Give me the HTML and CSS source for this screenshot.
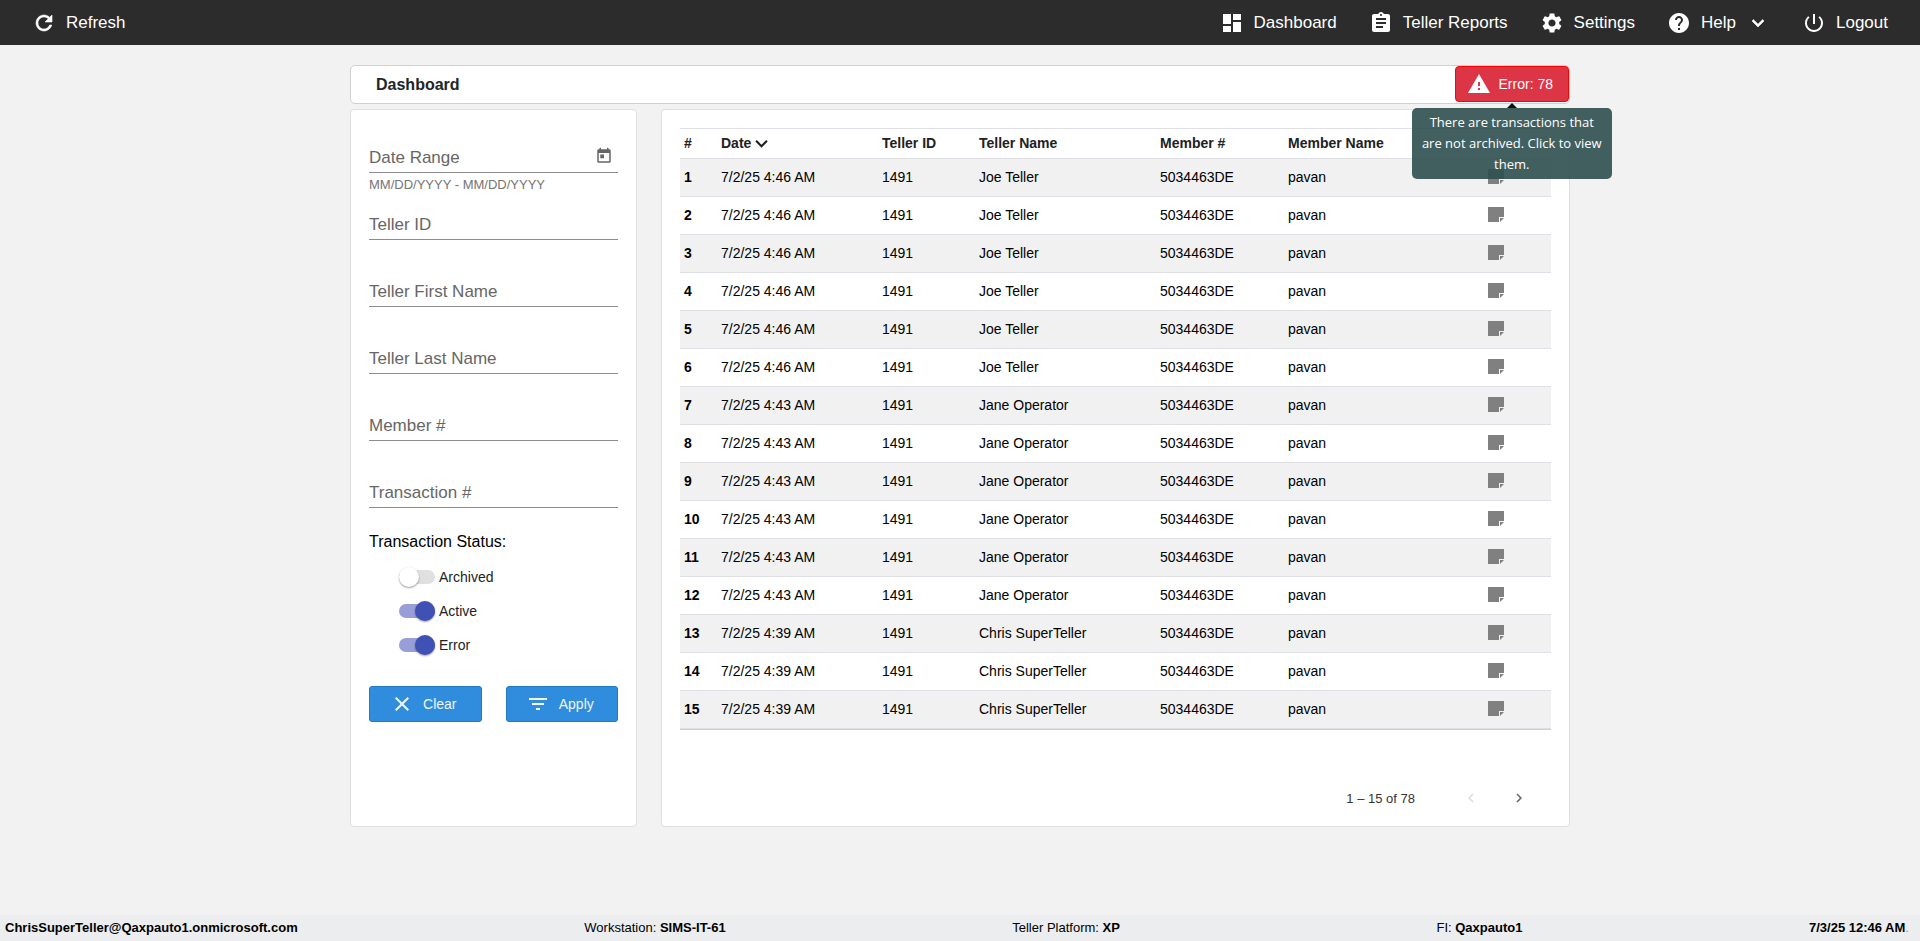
FILE: index.html
```html
<!DOCTYPE html>
<html lang="en">
<head>
    <meta charset="UTF-8">
    <meta name="viewport" content="width=device-width, initial-scale=1.0">
    <title>Dashboard</title>
    <link rel="stylesheet" href="styles.css">
</head>
<body>

    <nav class="topbar">
        <button class="nav-item" type="button">
            <svg class="icon" viewBox="0 0 24 24"><path d="M17.65 6.35C16.2 4.9 14.21 4 12 4c-4.42 0-7.99 3.58-7.99 8s3.57 8 7.99 8c3.73 0 6.84-2.55 7.73-6h-2.08c-.82 2.33-3.04 4-5.65 4-3.31 0-6-2.69-6-6s2.69-6 6-6c1.66 0 3.14.69 4.22 1.78L13 11h7V4l-2.35 2.35z" stroke="currentColor" stroke-width=".6"/></svg>
            Refresh
        </button>
        <div class="nav-links">
            <a class="nav-item" href="#dashboard">
                <svg class="icon" viewBox="0 0 24 24"><path d="M3 13h8V3H3v10zm0 8h8v-6H3v6zm10 0h8V11h-8v10zm0-18v6h8V3h-8z"/></svg>
                Dashboard
            </a>
            <a class="nav-item" href="#reports">
                <svg class="icon" viewBox="0 0 24 24"><path d="M19 3h-4.18C14.4 1.84 13.3 1 12 1c-1.3 0-2.4.84-2.82 2H5c-1.1 0-2 .9-2 2v14c0 1.1.9 2 2 2h14c1.1 0 2-.9 2-2V5c0-1.1-.9-2-2-2zm-7 0c.55 0 1 .45 1 1s-.45 1-1 1-1-.45-1-1 .45-1 1-1zm2 14H7v-2h7v2zm3-4H7v-2h10v2zm0-4H7V7h10v2z"/></svg>
                Teller Reports
            </a>
            <a class="nav-item" href="#settings">
                <svg class="icon" viewBox="0 0 24 24"><path d="M19.14 12.94c.04-.3.06-.61.06-.94 0-.32-.02-.64-.07-.94l2.03-1.58c.18-.14.23-.41.12-.61l-1.92-3.32c-.12-.22-.37-.29-.59-.22l-2.39.96c-.5-.38-1.03-.7-1.62-.94l-.36-2.54c-.04-.24-.24-.41-.48-.41h-3.84c-.24 0-.43.17-.47.41l-.36 2.54c-.59.24-1.13.57-1.62.94l-2.39-.96c-.22-.08-.47 0-.59.22L2.74 8.87c-.12.21-.08.47.12.61l2.03 1.58c-.05.3-.09.63-.09.94s.02.64.07.94l-2.03 1.58c-.18.14-.23.41-.12.61l1.92 3.32c.12.22.37.29.59.22l2.39-.96c.5.38 1.03.7 1.62.94l.36 2.54c.05.24.24.41.48.41h3.84c.24 0 .44-.17.47-.41l.36-2.54c.59-.24 1.13-.56 1.62-.94l2.39.96c.22.08.47 0 .59-.22l1.92-3.32c.12-.22.07-.47-.12-.61l-2.01-1.58zM12 15.6c-1.98 0-3.6-1.62-3.6-3.6s1.62-3.6 3.6-3.6 3.6 1.62 3.6 3.6-1.62 3.6-3.6 3.6z"/></svg>
                Settings
            </a>
            <button class="nav-item" type="button">
                <svg class="icon" viewBox="0 0 24 24"><path d="M12 2C6.48 2 2 6.48 2 12s4.48 10 10 10 10-4.48 10-10S17.52 2 12 2zm1 17h-2v-2h2v2zm2.07-7.75l-.9.92C13.45 12.9 13 13.5 13 15h-2v-.5c0-1.1.45-2.1 1.17-2.83l1.24-1.26c.37-.36.59-.86.59-1.41 0-1.1-.9-2-2-2s-2 .9-2 2H8c0-2.21 1.79-4 4-4s4 1.79 4 4c0 .88-.36 1.68-.93 2.25z"/></svg>
                Help
                <svg class="icon" viewBox="0 0 24 24"><path d="M16.59 8.59L12 13.17 7.41 8.59 6 10l6 6 6-6z" stroke="currentColor" stroke-width=".6"/></svg>
            </button>
            <button class="nav-item" type="button">
                <svg class="icon" viewBox="0 0 24 24"><path d="M13 3h-2v10h2V3zm4.83 2.17l-1.42 1.42C17.99 7.86 19 9.81 19 12c0 3.87-3.13 7-7 7s-7-3.13-7-7c0-2.19 1.01-4.14 2.58-5.42L6.17 5.17C4.23 6.82 3 9.26 3 12c0 4.97 4.03 9 9 9s9-4.03 9-9c0-2.74-1.23-5.18-3.17-6.83z"/></svg>
                Logout
            </button>
        </div>
    </nav>

    <main>
        <header class="title-bar">
            <h1>Dashboard</h1>
            <div class="error-wrap">
                <button class="error-button" type="button" aria-describedby="error-tip">
                    <svg class="icon" viewBox="0 0 24 24"><path d="M1 21h22L12 2 1 21zm12-3h-2v-2h2v2zm0-4h-2v-4h2v4z"/></svg>
                    Error: 78
                </button>
                <div class="tooltip" id="error-tip" role="tooltip">There are transactions that<br>are not archived. Click to view<br>them.</div>
            </div>
        </header>

        <div class="columns">
            <form class="card filters">
                <div class="field">
                    <div class="field-box">
                        <label for="date-range">Date Range</label>
                        <input type="text" id="date-range">
                        <button class="calendar-button" type="button" aria-label="Open calendar">
                            <svg viewBox="0 0 24 24"><path d="M19 3h-1V1h-2v2H8V1H6v2H5c-1.11 0-1.99.9-1.99 2L3 19c0 1.1.89 2 2 2h14c1.1 0 2-.9 2-2V5c0-1.1-.9-2-2-2zm0 16H5V8h14v11zM7 10h5v5H7z"/></svg>
                        </button>
                    </div>
                    <div class="hint">MM/DD/YYYY - MM/DD/YYYY</div>
                </div>
                <div class="field">
                    <div class="field-box">
                        <label for="teller-id">Teller ID</label>
                        <input type="text" id="teller-id">
                    </div>
                </div>
                <div class="field">
                    <div class="field-box">
                        <label for="first-name">Teller First Name</label>
                        <input type="text" id="first-name">
                    </div>
                </div>
                <div class="field">
                    <div class="field-box">
                        <label for="last-name">Teller Last Name</label>
                        <input type="text" id="last-name">
                    </div>
                </div>
                <div class="field">
                    <div class="field-box">
                        <label for="member">Member #</label>
                        <input type="text" id="member">
                    </div>
                </div>
                <div class="field">
                    <div class="field-box">
                        <label for="transaction">Transaction #</label>
                        <input type="text" id="transaction">
                    </div>
                </div>

                <h2>Transaction Status:</h2>
                <div class="toggles">
                    <div class="toggle">
                        <input type="checkbox" id="archived">
                        <label for="archived">Archived</label>
                    </div>
                    <div class="toggle">
                        <input type="checkbox" id="active" checked>
                        <label for="active">Active</label>
                    </div>
                    <div class="toggle">
                        <input type="checkbox" id="error" checked>
                        <label for="error">Error</label>
                    </div>
                </div>

                <div class="actions">
                    <button class="action-button" type="reset">
                        <svg class="icon" viewBox="0 0 24 24"><path d="M19 6.41L17.59 5 12 10.59 6.41 5 5 6.41 10.59 12 5 17.59 6.41 19 12 13.41 17.59 19 19 17.59 13.41 12z"/></svg>
                        Clear
                    </button>
                    <button class="action-button" type="button">
                        <svg class="icon" viewBox="0 0 24 24"><path d="M10 18h4v-2h-4v2zM3 6v2h18V6H3zm3 7h12v-2H6v2z"/></svg>
                        Apply
                    </button>
                </div>
            </form>

            <section class="card results">
                <table>
                    <thead>
                        <tr>
                            <th class="col-num">#</th>
                            <th class="col-date">Date <svg class="sort-icon" viewBox="0 0 12 8"><path d="M1 1.5l5 5 5-5"/></svg></th>
                            <th class="col-id">Teller ID</th>
                            <th class="col-teller">Teller Name</th>
                            <th class="col-member">Member #</th>
                            <th class="col-name">Member Name</th>
                            <th class="col-note"></th>
                        </tr>
                    </thead>
                    <tbody id="rows"></tbody>
                </table>
                <div class="paginator">
                    <span>1 – 15 of 78</span>
                    <div class="pages">
                        <button type="button" aria-label="Previous page" disabled>
                            <svg viewBox="0 0 24 24"><path d="M15.41 7.41L14 6l-6 6 6 6 1.41-1.41L10.83 12z"/></svg>
                        </button>
                        <button type="button" aria-label="Next page">
                            <svg viewBox="0 0 24 24"><path d="M10 6L8.59 7.41 13.17 12l-4.58 4.59L10 18l6-6z"/></svg>
                        </button>
                    </div>
                </div>
            </section>
        </div>
    </main>

    <footer>
        <b>ChrisSuperTeller@Qaxpauto1.onmicrosoft.com</b>
        <span>Workstation: <b>SIMS-IT-61</b></span>
        <span class="platform">Teller Platform: <b>XP</b></span>
        <span>FI: <b>Qaxpauto1</b></span>
        <span><b>7/3/25 12:46 AM</b><span class="dot">.</span></span>
    </footer>

    <script>
        // six rows for Joe, six for Jane, three for Chris
        const groups = [
            { date: '7/2/25 4:46 AM', teller: 'Joe Teller', count: 6 },
            { date: '7/2/25 4:43 AM', teller: 'Jane Operator', count: 6 },
            { date: '7/2/25 4:39 AM', teller: 'Chris SuperTeller', count: 3 }
        ];

        function showRows() {
            let html = '';
            let number = 1;
            groups.forEach(group => {
                for (let i = 0; i < group.count; i++) {
                    html += `
                        <tr>
                            <th scope="row">${number}</th>
                            <td>${group.date}</td>
                            <td>1491</td>
                            <td>${group.teller}</td>
                            <td>5034463DE</td>
                            <td>pavan</td>
                            <td class="note">
                                <button type="button" aria-label="Notes">
                                    <svg viewBox="0 0 16 15"><path d="M0 0h16v10h-5v5H0z"/><path d="M12 11h4l-4 4z"/></svg>
                                </button>
                            </td>
                        </tr>
                    `;
                    number++;
                }
            });
            document.getElementById('rows').innerHTML = html;
        }

        showRows();
    </script>

</body>
</html>
```
FILE: styles.css
```css
* {
    box-sizing: border-box;
}
body {
    font-family: "Liberation Sans", Arial, sans-serif;
    font-size: 14px;
    margin: 0;
    min-height: 100vh;
    display: flex;
    flex-direction: column;
    background-color: #f2f2f2;
    color: #000;
}
button {
    font-family: inherit;
    padding: 0;
    border: none;
    background: none;
    cursor: pointer;
}
svg {
    display: block;
    fill: currentColor;
}
.icon {
    width: 24px;
    height: 24px;
}
.topbar {
    display: flex;
    justify-content: space-between;
    align-items: center;
    height: 45px;
    padding: 0 32px;
    background-color: #2c2c2c;
}
.nav-links {
    display: flex;
    gap: 32px;
}
.nav-item {
    display: flex;
    align-items: center;
    gap: 10px;
    color: white;
    font-size: 17px;
    line-height: 24px;
    text-decoration: none;
}
.nav-item:hover {
    color: #ccc;
}
main {
    width: 100%;
    max-width: 1220px;
    margin: 20px auto;
}
.title-bar {
    display: flex;
    justify-content: space-between;
    align-items: center;
    height: 39px;
    padding-left: 25px;
    background-color: white;
    border: 1px solid #d0d0d2;
    border-radius: 5px;
}
h1 {
    margin: 0;
    font-size: 16px;
    color: #212529;
}
.error-wrap {
    position: relative;
    align-self: flex-start;
}
.error-button {
    display: flex;
    align-items: center;
    gap: 8px;
    height: 36px;
    padding: 0 15px 0 11px;
    background-color: #dc3545;
    border: 1px solid red;
    border-radius: 4px;
    color: white;
    font-size: 14px;
}
.tooltip {
    position: absolute;
    top: 42px;
    left: 50%;
    width: 200px;
    margin-left: -100px;
    padding: 4px 0;
    background-color: rgba(47, 79, 79, 0.9);
    border-radius: 5px;
    color: white;
    font-family: "Open Sans", "Noto Sans", sans-serif;
    font-size: 13px;
    line-height: 21px;
    text-align: center;
    white-space: nowrap;
}
.tooltip::before {
    content: "";
    position: absolute;
    bottom: 100%;
    left: 50%;
    margin-left: -5px;
    border: 5px solid transparent;
    border-top: none;
    border-bottom-color: #111;
}
.columns {
    display: grid;
    grid-template-columns: 287px 1fr;
    gap: 24px;
    margin-top: 5px;
}
.card {
    background-color: white;
    border: 1px solid #dfdfe1;
    border-radius: 4px;
    padding: 18px;
}
.field {
    height: 67px;
}
/* label and input share one cell */
.field-box {
    display: grid;
    align-items: end;
    height: 45px;
    border-bottom: 1px solid #8c8c8c;
}
.field-box > * {
    grid-area: 1 / 1;
}
.field-box label {
    padding-bottom: 4px;
    color: #666;
    font-size: 17px;
    line-height: 20px;
    pointer-events: none;
}
.field-box input {
    width: 100%;
    height: 28px;
    padding: 0;
    border: none;
    outline: none;
    background: none;
    font-size: 16px;
}
.calendar-button {
    justify-self: end;
    padding: 0 5px 7px;
    color: #666;
}
.calendar-button svg {
    width: 18px;
    height: 18px;
}
.hint {
    margin-top: 4px;
    color: #757575;
    font-size: 13px;
    line-height: 16px;
}
h2 {
    margin: 2px 0 8px;
    font-size: 16px;
    font-weight: normal;
    line-height: 20px;
}
.toggles {
    padding-left: 30px;
}
.toggle {
    display: flex;
    align-items: center;
    gap: 4px;
    height: 34px;
    color: #222;
}
.toggle input {
    appearance: none;
    display: flex;
    align-items: center;
    width: 36px;
    height: 14px;
    margin: 0;
    background-color: #e0e0e0;
    border-radius: 7px;
}
.toggle input::before {
    content: "";
    flex: none;
    width: 20px;
    height: 20px;
    background-color: white;
    border-radius: 50%;
    box-shadow: 0 1px 2px rgba(0, 0, 0, 0.4);
}
.toggle input:checked {
    background-color: #989fd8;
}
.toggle input:checked::before {
    margin-left: 16px;
    background-color: #3f51b5;
}
.actions {
    display: flex;
    gap: 24px;
    margin-top: 24px;
}
.action-button {
    display: flex;
    flex: 1;
    justify-content: center;
    align-items: center;
    gap: 9px;
    height: 36px;
    padding-right: 4px;
    background-color: #308ddd;
    border: 1px solid #2079c4;
    border-radius: 3px;
    color: #f0f6fc;
    font-size: 14px;
}
.action-button:hover {
    background-color: #2079c4;
}
.results {
    padding-bottom: 4px;
}
table {
    width: 100%;
    table-layout: fixed;
    border-collapse: separate;
    border-spacing: 0;
    border-top: 1px solid #dee0e6;
    box-shadow: 0 1px 0 #cfcfd3;
}
th, td {
    height: 38px;
    padding: 0 4px 2px;
    border-bottom: 1px solid #dee0e6;
    text-align: left;
}
thead th {
    height: 30px;
    color: #212121;
}
tbody tr:nth-child(odd) {
    background-color: #f1f1f1;
}
.col-num {
    width: 37px;
}
.col-date {
    width: 161px;
}
.col-id {
    width: 97px;
}
.col-teller {
    width: 181px;
}
.col-member {
    width: 128px;
}
.col-name {
    width: 157px;
}
.col-note {
    width: 110px;
}
.sort-icon {
    display: inline-block;
    width: 13px;
    height: 9px;
    fill: none;
    stroke: currentColor;
    stroke-width: 2;
}
.note button {
    display: block;
    margin: 0 auto;
    color: #808080;
}
.note svg {
    width: 16px;
    height: 15px;
}
.paginator {
    display: flex;
    justify-content: flex-end;
    align-items: center;
    gap: 32px;
    margin-top: 45px;
    padding-right: 8px;
    color: #333;
    font-size: 13px;
}
.pages {
    display: flex;
}
.pages button {
    display: grid;
    place-items: center;
    width: 48px;
    height: 48px;
    color: #666;
}
.pages button:disabled {
    color: #ddd;
    cursor: default;
}
.pages svg {
    width: 18px;
    height: 18px;
}
footer {
    display: flex;
    justify-content: space-between;
    align-items: center;
    height: 26px;
    margin-top: auto;
    padding: 0 11px 2px 5px;
    background-color: #ebedef;
    font-size: 13px;
}
.platform {
    margin-right: 30px;
}
.dot {
    color: #999;
}
```
